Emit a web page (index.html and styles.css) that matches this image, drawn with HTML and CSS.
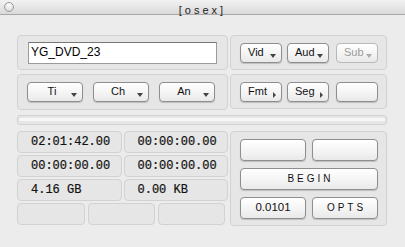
FILE: index.html
```html
<!DOCTYPE html>
<html lang="en">
<head>
    <meta charset="UTF-8">
    <title>[osex]</title>
    <link rel="stylesheet" href="styles.css">
</head>
<body>
    <div class="titlebar">
        <span class="close-dot"></span>
        <span class="title">[osex]</span>
    </div>

    <div class="window">
        <div class="panel name-panel">
            <div class="text-field">YG_DVD_23</div>
        </div>
        <div class="panel tracks-panel">
            <button class="btn pop">Vid</button>
            <button class="btn pop">Aud</button>
            <button class="btn pop off">Sub</button>
        </div>

        <div class="panel chapters-panel">
            <button class="btn pop wide">Ti</button>
            <button class="btn pop wide">Ch</button>
            <button class="btn pop wide">An</button>
        </div>
        <div class="panel format-panel">
            <button class="btn more">Fmt</button>
            <button class="btn more">Seg</button>
            <button class="btn"></button>
        </div>

        <div class="progress"><div class="progress-track"></div></div>

        <div class="stats">
            <div class="stat-row">
                <div class="cell">02:01:42.00</div>
                <div class="cell">00:00:00.00</div>
            </div>
            <div class="stat-row">
                <div class="cell">00:00:00.00</div>
                <div class="cell">00:00:00.00</div>
            </div>
            <div class="stat-row">
                <div class="cell">4.16 GB</div>
                <div class="cell">0.00 KB</div>
            </div>
            <div class="stat-row three">
                <div class="cell"></div>
                <div class="cell"></div>
                <div class="cell"></div>
            </div>
        </div>

        <div class="panel actions-panel">
            <button class="btn"></button>
            <button class="btn"></button>
            <button class="btn spaced full">BEGIN</button>
            <button class="btn">0.0101</button>
            <button class="btn spaced">OPTS</button>
        </div>
    </div>
</body>
</html>
```

FILE: styles.css
```css
:root {
    --bg: #ececec;
    --panel: #e6e6e6;
    --panel-line: #d2d2d2;
    --btn-line: #8e8e8e;
}

body {
    margin: 0;
    width: 405px;
    height: 247px;
    background-color: var(--bg);
    font-family: "Liberation Sans", Arial, sans-serif;
    overflow: hidden;
}

.titlebar {
    height: 14px;
    border-bottom: 1px solid #a8a8a8;
    background: linear-gradient(#f2f2f2, #dadada);
    position: relative;
    text-align: center;
}
.close-dot {
    position: absolute;
    left: 4px;
    top: 2px;
    width: 8px;
    height: 8px;
    border-radius: 50%;
    border: 1px solid #9c9c9c;
    background: radial-gradient(circle at 50% 30%, #ffffff, #cfcfcf);
}
.title {
    font-size: 11px;
    line-height: 14px;
    letter-spacing: 3px;
    color: #222;
}

.window {
    display: grid;
    grid-template-columns: 211px 157px;
    column-gap: 2px;
    row-gap: 4px;
    padding: 20px 0 0 17px;
}

.panel {
    background-color: var(--panel);
    border: 1px solid var(--panel-line);
    border-radius: 4px;
    box-sizing: border-box;
    display: flex;
    align-items: center;
}

.name-panel {
    height: 35px;
    padding: 0 10px;
}
.text-field {
    flex: 1;
    height: 22px;
    box-sizing: border-box;
    background: #fff;
    border: 1px solid #9b9b9b;
    border-top-color: #777;
    font-size: 12px;
    line-height: 19px;
    padding-left: 2px;
    color: #000;
}

.tracks-panel,
.format-panel {
    height: 35px;
    padding: 0 8px 0 9px;
    gap: 5px;
}
.tracks-panel .btn:last-child,
.format-panel .btn:last-child {
    margin-left: 2px;
}

.chapters-panel {
    height: 36px;
    padding: 0 11px 0 9px;
    gap: 10px;
}

.btn {
    position: relative;
    height: 20px;
    flex: 0 0 42px;
    width: 42px;
    padding: 0 0 2px;
    box-sizing: border-box;
    border: 1px solid var(--btn-line);
    border-radius: 4px;
    background: linear-gradient(#ffffff, #f3f3f3 60%, #e9e9e9);
    box-shadow: 0 1px 1px rgba(0, 0, 0, 0.18);
    font-family: "Liberation Sans", Arial, sans-serif;
    font-size: 11px;
    color: #111;
    text-align: center;
}
.btn.wide {
    flex-basis: 56px;
    width: 56px;
}
.btn.off {
    color: #9a9a9a;
    border-color: #b8b8b8;
    box-shadow: none;
}

/* small arrows on popup buttons */
.pop::after {
    content: "";
    position: absolute;
    right: 5px;
    bottom: 4px;
    border-left: 3px solid transparent;
    border-right: 3px solid transparent;
    border-top: 4px solid #444;
}
.pop.off::after {
    border-top-color: #aaa;
}
.more::after {
    content: "";
    position: absolute;
    right: 5px;
    bottom: 3px;
    border-top: 3px solid transparent;
    border-bottom: 3px solid transparent;
    border-left: 3px solid #444;
}
.pop.wide {
    padding-right: 6px;
}
.pop:not(.wide),
.more {
    text-align: left;
    padding-left: 7px;
}

.progress {
    grid-column: 1 / 3;
    height: 10px;
    margin-top: 1px;
    box-sizing: border-box;
    border: 1px solid var(--panel-line);
    border-radius: 3px;
    background: var(--panel);
    padding: 2px 1px 1px;
}
.progress-track {
    height: 3px;
    background: #f7f7f7;
    border-radius: 2px;
}

.stats {
    margin-top: 2px;
    display: flex;
    flex-direction: column;
    gap: 2px;
}
.stat-row {
    display: grid;
    grid-template-columns: 1fr 1fr;
    gap: 2px;
}
.stat-row.three {
    grid-template-columns: 68px 67px 67px;
    gap: 3px;
}
.cell {
    height: 22px;
    box-sizing: border-box;
    background: var(--panel);
    border: 1px solid var(--panel-line);
    border-radius: 4px;
    font-family: "Liberation Mono", "Courier New", monospace;
    font-size: 12px;
    line-height: 20px;
    padding-left: 13px;
    color: #111;
    -webkit-text-stroke: 0.2px #111;
}

.actions-panel {
    margin-top: 2px;
    height: 95px;
    padding: 7px 8px 0 9px;
    display: grid;
    grid-template-columns: 1fr 1fr;
    column-gap: 6px;
    row-gap: 7px;
    align-content: start;
    align-items: start;
}
.actions-panel .btn {
    width: auto;
    height: 22px;
    font-size: 11.5px;
}
.actions-panel .full {
    grid-column: 1 / 3;
}
.actions-panel .spaced {
    font-size: 10px;
    letter-spacing: 3px;
    padding-left: 3px;
}
```
